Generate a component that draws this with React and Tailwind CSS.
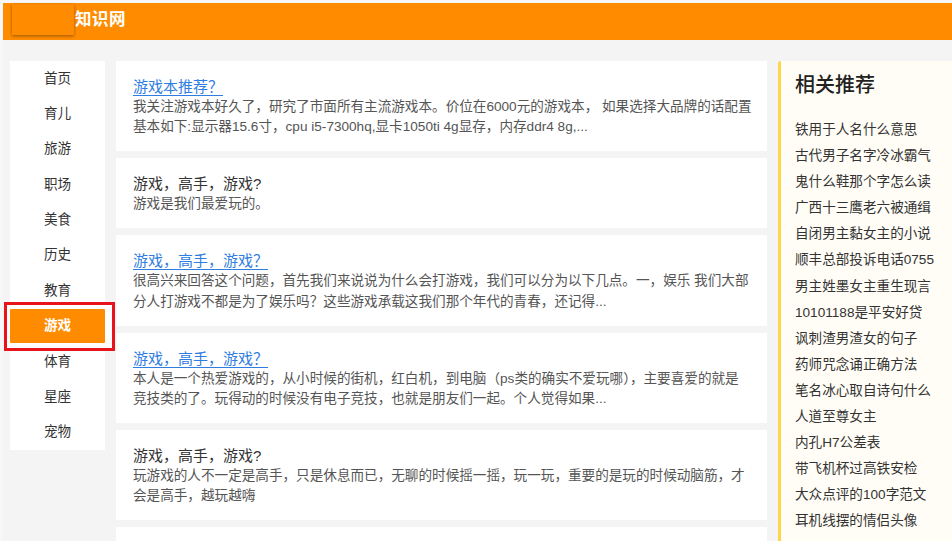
const navItems = ['首页', '育儿', '旅游', '职场', '美食', '历史', '教育', '游戏', '体育', '星座', '宠物'];

const posts = [
  {
    title: '游戏本推荐？',
    link: true,
    lines: [
      '我关注游戏本好久了，研究了市面所有主流游戏本。价位在6000元的游戏本， 如果选择大品牌的话配置',
      '基本如下:显示器15.6寸，cpu i5-7300hq,显卡1050ti 4g显存，内存ddr4 8g,...',
    ],
  },
  {
    title: '游戏，高手，游戏?',
    link: false,
    lines: ['游戏是我们最爱玩的。'],
  },
  {
    title: '游戏，高手，游戏？',
    link: true,
    lines: [
      '很高兴来回答这个问题，首先我们来说说为什么会打游戏，我们可以分为以下几点。一，娱乐 我们大部',
      '分人打游戏不都是为了娱乐吗？这些游戏承载这我们那个年代的青春，还记得...',
    ],
  },
  {
    title: '游戏，高手，游戏？',
    link: true,
    lines: [
      '本人是一个热爱游戏的，从小时候的街机，红白机，到电脑（ps类的确实不爱玩哪），主要喜爱的就是',
      '竞技类的了。玩得动的时候没有电子竞技，也就是朋友们一起。个人觉得如果...',
    ],
  },
  {
    title: '游戏，高手，游戏?',
    link: false,
    lines: [
      '玩游戏的人不一定是高手，只是休息而已，无聊的时候摇一摇，玩一玩，重要的是玩的时候动脑筋，才',
      '会是高手，越玩越嗨',
    ],
  },
];

const related = [
  '铁用于人名什么意思',
  '古代男子名字冷冰霸气',
  '鬼什么鞋那个字怎么读',
  '广西十三鹰老六被通缉',
  '自闭男主黏女主的小说',
  '顺丰总部投诉电话0755',
  '男主姓墨女主重生现言',
  '10101188是平安好贷',
  '讽刺渣男渣女的句子',
  '药师咒念诵正确方法',
  '笔名冰心取自诗句什么',
  '人道至尊女主',
  '内孔H7公差表',
  '带飞机杯过高铁安检',
  '大众点评的100字范文',
  '耳机线摆的情侣头像',
];

export default function App() {
  return (
    <div
      className="min-h-screen bg-[#f7f7f7] pl-[3px] pt-[3px] overflow-hidden"
      style={{ fontFamily: '"Liberation Sans", "Noto Sans CJK SC", sans-serif' }}
    >
      {/* Header */}
      <header className="h-[37px] bg-[#ff8c00] flex items-center pl-[9px] pb-[4px]">
        <div className="w-[62px] h-[31px] bg-[#ff8c00] shadow-[0_1px_3px_rgba(0,0,0,0.4)]"></div>
        <span className="ml-[1px] text-white font-bold text-[16.5px] leading-none tracking-[0.5px]">知识网</span>
      </header>

      <div className="bg-[#f4f4f4] flex items-start gap-[11px] pl-[7px] pt-[21px] min-h-[600px]">
        {/* Left nav */}
        <nav className="w-[95px] shrink-0 bg-white">
          {navItems.map((item) => (
            <div key={item} className="h-[35.4px] flex items-center justify-center">
              {item === '游戏' ? (
                <div className="relative w-full">
                  <div className="absolute -left-[6px] -right-[10px] -top-[7px] -bottom-[8px] border-[3px] border-[#e8141b] bg-white"></div>
                  <div className="relative h-[34px] bg-[#ff8c00] rounded-[1px] flex items-center justify-center text-white font-bold text-[13.6px]">
                    {item}
                  </div>
                </div>
              ) : (
                <span className="text-[13.6px] text-[#333]">{item}</span>
              )}
            </div>
          ))}
        </nav>

        {/* Post list */}
        <main className="w-[651px] shrink-0 flex flex-col gap-[7px]">
          {posts.map((post, i) => (
            <div key={i} className="bg-white pt-[16px] pb-[13.5px] px-[17px]">
              {post.link ? (
                <a href="#" className="block text-[15px] leading-[20px] text-[#2f7de1] underline underline-offset-[3px] decoration-[1px] w-fit">
                  {post.title}
                </a>
              ) : (
                <h3 className="text-[15px] leading-[20px] text-[#333]">{post.title}</h3>
              )}
              <p className="text-[13.6px] leading-[20.4px] text-[#555]">
                {post.lines.map((line, j) => (
                  <span key={j} className="block whitespace-nowrap">{line}</span>
                ))}
              </p>
            </div>
          ))}
          {/* next card, only its top shows in the viewport */}
          <div className="bg-white h-[90px]"></div>
        </main>

        {/* Related */}
        <aside className="flex-1 min-w-0 bg-[#fffdf6] border-l-[3.5px] border-[#ffd54a] rounded-tl-[3px] pl-[14px] pt-[10px] min-h-[520px]">
          <h2 className="text-[20px] leading-[28px] font-medium text-[#222]">相关推荐</h2>
          <ul className="mt-[18px]">
            {related.map((r) => (
              <li key={r} className="text-[13.6px] leading-[26.1px] text-[#333] whitespace-nowrap">{r}</li>
            ))}
          </ul>
        </aside>
      </div>
    </div>
  );
}
